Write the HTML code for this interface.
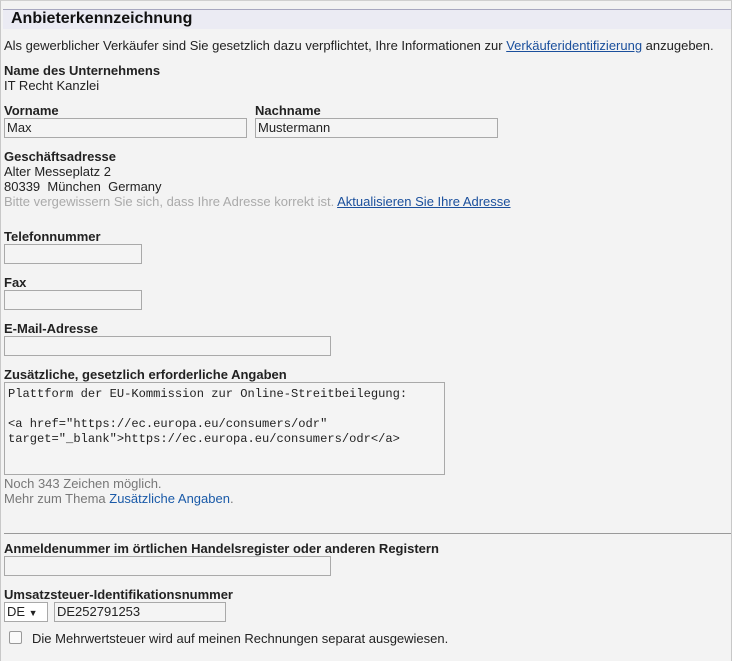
<!DOCTYPE html>
<html><head><meta charset="utf-8"><style>
body{margin:0;width:732px;height:660px;background:#f3f3f3;font-family:"Liberation Sans",Arial,sans-serif;font-size:13px;color:#222;position:relative;overflow:hidden}
.frame{position:absolute;left:0;top:0;width:730px;height:660px;border-left:1px solid #c8c8c8;border-right:1px solid #c8c8c8;border-top:1px solid #d0d0d0}
.t{position:absolute;left:4px;white-space:nowrap;line-height:15px}
.b{font-weight:bold}
a{color:#1a4f9c;text-decoration:underline}
.in{position:absolute;border:1px solid #a9a9a9;background:#f4f4f4;box-sizing:border-box;height:20px;font-size:13px;line-height:18px;padding-left:2px}
.gray{color:#aaa}
</style></head><body>
<div class="frame"></div>
<div style="position:absolute;left:3px;top:9px;width:728px;height:19px;background:#ebebf3;border-top:1px solid #a8a8c0"></div>
<div class="t b" style="left:11px;top:10px;font-size:16px;line-height:18px;color:#111">Anbieterkennzeichnung</div>
<div class="t" style="top:38px">Als gewerblicher Verkäufer sind Sie gesetzlich dazu verpflichtet, Ihre Informationen zur <a>Verkäuferidentifizierung</a> anzugeben.</div>
<div class="t b" style="top:63px">Name des Unternehmens</div>
<div class="t" style="top:78px">IT Recht Kanzlei</div>
<div class="t b" style="top:103px">Vorname</div>
<div class="t b" style="top:103px;left:255px">Nachname</div>
<div class="in" style="left:4px;top:118px;width:243px">Max</div>
<div class="in" style="left:255px;top:118px;width:243px">Mustermann</div>
<div class="t b" style="top:149px">Geschäftsadresse</div>
<div class="t" style="top:164px">Alter Messeplatz 2</div>
<div class="t" style="top:179px">80339&nbsp; München&nbsp; Germany</div>
<div class="t" style="top:194px"><span class="gray">Bitte vergewissern Sie sich, dass Ihre Adresse korrekt ist.</span> <a>Aktualisieren Sie Ihre Adresse</a></div>
<div class="t b" style="top:229px">Telefonnummer</div>
<div class="in" style="left:4px;top:244px;width:138px"></div>
<div class="t b" style="top:275px">Fax</div>
<div class="in" style="left:4px;top:290px;width:138px"></div>
<div class="t b" style="top:321px">E-Mail-Adresse</div>
<div class="in" style="left:4px;top:336px;width:327px"></div>
<div class="t b" style="top:367px">Zusätzliche, gesetzlich erforderliche Angaben</div>
<div class="in" style="left:4px;top:382px;width:441px;height:93px;font-family:'Liberation Mono',monospace;font-size:12.1px;line-height:15px;padding:4px 0 0 3px;white-space:pre;color:#222">Plattform der EU-Kommission zur Online-Streitbeilegung:

&lt;a href="https://ec.europa.eu/consumers/odr"
target="_blank"&gt;https://ec.europa.eu/consumers/odr&lt;/a&gt;</div>
<div class="t" style="top:476px;color:#777">Noch 343 Zeichen möglich.</div>
<div class="t" style="top:491px;color:#777">Mehr zum Thema <span style="color:#1a5aa8">Zusätzliche Angaben</span>.</div>
<div style="position:absolute;left:4px;top:533px;width:727px;height:1px;background:#999"></div>
<div class="t b" style="top:541px">Anmeldenummer im örtlichen Handelsregister oder anderen Registern</div>
<div class="in" style="left:4px;top:556px;width:327px"></div>
<div class="t b" style="top:587px">Umsatzsteuer-Identifikationsnummer</div>
<div class="in" style="left:4px;top:602px;width:44px;background:#fff">DE <span style="font-size:9px">▼</span></div>
<div class="in" style="left:54px;top:602px;width:172px">DE252791253</div>
<div style="position:absolute;left:9px;top:631px;width:11px;height:11px;border:1px solid #999;border-radius:2px;background:#fafafa"></div>
<div class="t" style="left:32px;top:631px">Die Mehrwertsteuer wird auf meinen Rechnungen separat ausgewiesen.</div>
</body></html>
